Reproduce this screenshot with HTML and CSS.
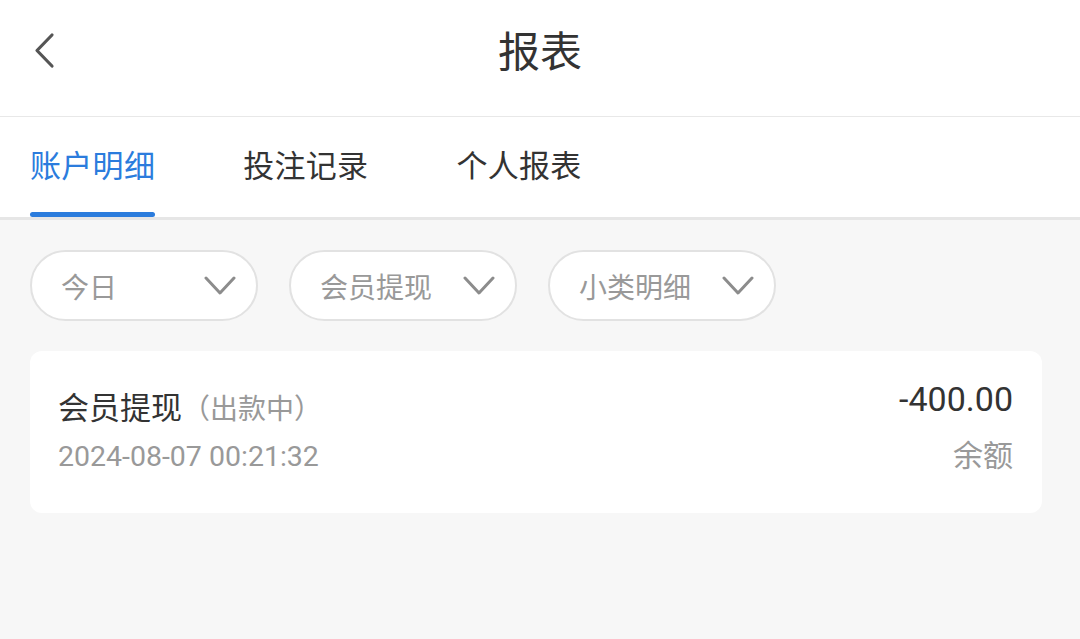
FILE: index.html
```html
<!DOCTYPE html>
<html lang="zh-CN">
<head>
    <meta charset="UTF-8">
    <meta name="viewport" content="width=device-width, initial-scale=1.0">
    <title>报表</title>
    <link rel="stylesheet" href="styles.css">
</head>
<body>
    <div class="page">
        <div class="header">
            <a class="back" href="#">
                <svg width="30" height="40" viewBox="0 0 30 40">
                    <path d="M22 4 L7 19.5 L22 35" fill="none" stroke="#555" stroke-width="3.2" stroke-linecap="round" stroke-linejoin="round"/>
                </svg>
            </a>
            <h1 class="title">报表</h1>
        </div>

        <ul class="tabs">
            <li class="active">账户明细</li>
            <li>投注记录</li>
            <li>个人报表</li>
        </ul>

        <div class="filters">
            <div class="pill">
                <span>今日</span>
                <svg class="arrow" width="32" height="20" viewBox="0 0 32 20"><path d="M2 2 L16 17 L30 2" fill="none" stroke="#8c8c8c" stroke-width="3" stroke-linecap="round" stroke-linejoin="round"/></svg>
            </div>
            <div class="pill">
                <span>会员提现</span>
                <svg class="arrow" width="32" height="20" viewBox="0 0 32 20"><path d="M2 2 L16 17 L30 2" fill="none" stroke="#8c8c8c" stroke-width="3" stroke-linecap="round" stroke-linejoin="round"/></svg>
            </div>
            <div class="pill">
                <span>小类明细</span>
                <svg class="arrow" width="32" height="20" viewBox="0 0 32 20"><path d="M2 2 L16 17 L30 2" fill="none" stroke="#8c8c8c" stroke-width="3" stroke-linecap="round" stroke-linejoin="round"/></svg>
            </div>
        </div>

        <div class="list">
            <div class="item">
                <div class="left">
                    <p class="name">会员提现<em>（出款中）</em></p>
                    <p class="time">2024-08-07 00:21:32</p>
                </div>
                <div class="right">
                    <p class="money">-400.00</p>
                    <p class="label">余额</p>
                </div>
            </div>
        </div>
    </div>
</body>
</html>
```

FILE: styles.css
```css
* {
    padding: 0;
    margin: 0;
    box-sizing: border-box;
}
body {
    width: 1080px;
    height: 639px;
    overflow: hidden;
    background-color: #f7f7f7;
    font-family: Roboto, "Noto Sans CJK SC", sans-serif;
    color: #333;
}

.header {
    height: 117px;
    background-color: #fff;
    border-bottom: 1px solid #e8e8e8;
    display: flex;
    align-items: center;
    justify-content: center;
    position: relative;
}
.header .back {
    position: absolute;
    left: 30px;
    top: 31px;
    display: block;
}
.header .title {
    font-size: 42px;
    font-weight: normal;
    color: #333;
    margin-top: -20px;
}

.tabs {
    list-style: none;
    height: 103px;
    background-color: #fff;
    border-bottom: 3px solid #e6e6e6;
    display: flex;
    padding-left: 30px;
    gap: 88px;
}
.tabs li {
    font-size: 31px;
    line-height: 100px;
    color: #333;
    position: relative;
    letter-spacing: 0.3px;
}
.tabs li.active {
    color: #2b7cdd;
}
.tabs li.active::after {
    content: "";
    position: absolute;
    left: 0;
    right: 0;
    bottom: 0;
    height: 5px;
    border-radius: 3px;
    background-color: #2b7cdd;
}

.filters {
    display: flex;
    gap: 31px;
    padding: 30px 30px 0;
}
.pill {
    width: 228px;
    height: 71px;
    background-color: #fff;
    border: 2px solid #e2e2e2;
    border-radius: 36px;
    display: flex;
    align-items: center;
    justify-content: space-between;
    padding: 0 20px 0 29px;
    font-size: 28px;
    color: #999;
}
.pill .arrow {
    display: block;
    margin-top: 0;
}

.list {
    padding: 30px 38px 0 30px;
}
.item {
    background-color: #fff;
    border-radius: 12px;
    height: 162px;
    display: flex;
    justify-content: space-between;
    padding: 0 29px 0 28px;
}
.item .left {
    padding-top: 36px;
}
.item .name {
    font-size: 31px;
    color: #333;
    line-height: 44px;
}
.item .name em {
    font-style: normal;
    font-size: 28px;
    color: #999;
}
.item .time {
    font-size: 28.5px;
    color: #999;
    line-height: 40px;
    margin-top: 5px;
}
.item .right {
    text-align: right;
    padding-top: 26px;
}
.item .money {
    font-size: 34px;
    color: #333;
    line-height: 44px;
}
.item .label {
    font-size: 30px;
    color: #999;
    line-height: 44px;
    margin-top: 13px;
}
```
